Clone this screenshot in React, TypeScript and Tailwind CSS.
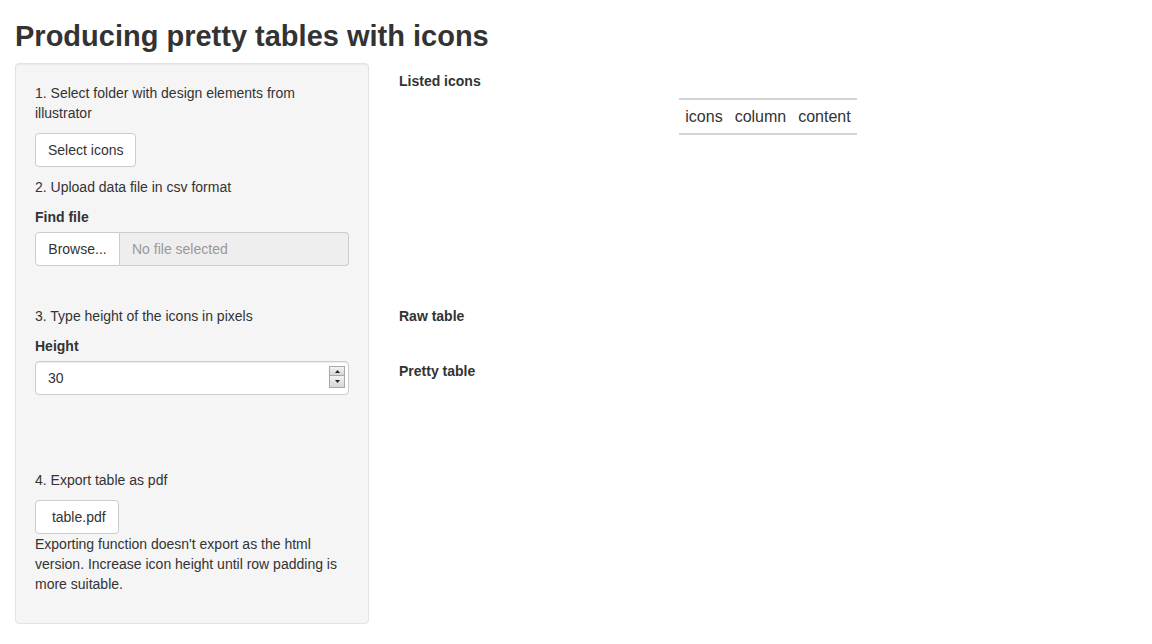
import React from "react"

function Btn({ children }: { children: React.ReactNode }) {
  return (
    <button className="h-[34px] px-[12px] bg-white border border-[#cccccc] rounded-[4px] text-[14px] leading-[20px] text-[#333333]">
      {children}
    </button>
  )
}

function Spinner() {
  return (
    <div className="absolute right-[4px] top-[5px] flex flex-col w-[16px]">
      <div className="h-[10px] bg-gradient-to-b from-[#f4f4f4] to-[#d6d6d6] border border-[#a9a9a9] flex items-center justify-center">
        <svg width="5" height="3" viewBox="0 0 5 3">
          <path d="M2.5 0 L5 3 L0 3 Z" fill="#222" />
        </svg>
      </div>
      <div className="h-[12px] bg-gradient-to-b from-[#f4f4f4] to-[#d6d6d6] border border-t-0 border-[#a9a9a9] flex items-center justify-center">
        <svg width="5" height="3" viewBox="0 0 5 3">
          <path d="M0 0 L5 0 L2.5 3 Z" fill="#222" />
        </svg>
      </div>
    </div>
  )
}

export default function App() {
  return (
    <div className="px-[15px] bg-white text-[#333333] text-[14px] leading-[20px] font-['Liberation_Sans',Arial,sans-serif] min-h-[644px]">
      <h2 className="mt-[20px] mb-[10px] text-[29px] leading-[33px] font-bold">Producing pretty tables with icons</h2>

      <div className="flex -mx-[15px]">
        <div className="w-1/3 px-[15px]">
          <div className="bg-[#f5f5f5] border border-[#e3e3e3] rounded-[4px] p-[19px] shadow-[inset_0_1px_1px_rgba(0,0,0,0.05)]">
            <p className="mb-[10px]">1. Select folder with design elements from illustrator</p>
            <div className="mb-[10px]">
              <Btn>Select icons</Btn>
            </div>
            <p className="mb-[10px]">2. Upload data file in csv format</p>
            <label className="block mb-[5px] font-bold">Find file</label>
            <div className="flex h-[34px] mb-[40px]">
              <button className="w-[85px] bg-white border border-[#cccccc] rounded-l-[4px] text-[14px] leading-[20px] text-[#333333]">
                Browse...
              </button>
              <div className="flex-1 flex items-center px-[12px] bg-[#eeeeee] border border-l-0 border-[#cccccc] rounded-r-[4px] text-[#999999]">
                No file selected
              </div>
            </div>

            <p className="mb-[10px]">3. Type height of the icons in pixels</p>
            <label className="block mb-[5px] font-bold">Height</label>
            <div className="relative h-[34px] mb-[75px]">
              <div className="h-full flex items-center px-[12px] bg-white border border-[#cccccc] rounded-[4px] shadow-[inset_0_1px_1px_rgba(0,0,0,0.075)]">
                30
              </div>
              <Spinner />
            </div>

            <p className="mb-[10px]">4. Export table as pdf</p>
            <Btn>&nbsp;table.pdf</Btn>
            <p className="mb-[10px]">
              Exporting function doesn't export as the html version. Increase icon height until row padding is more suitable.
            </p>
          </div>
        </div>

        <div className="w-2/3 px-[15px] pt-[8px]">
          <div className="font-bold">Listed icons</div>
          <div className="flex justify-center mt-[7px]">
            <table className="border-y-2 border-[#d3d3d3] border-collapse">
              <thead>
                <tr className="text-[16px] leading-[23px] font-normal">
                  <th className="px-[6px] py-[5px] font-normal">icons</th>
                  <th className="px-[6px] py-[5px] font-normal">column</th>
                  <th className="px-[6px] py-[5px] font-normal">content</th>
                </tr>
              </thead>
            </table>
          </div>
          <div className="font-bold mt-[171px]">Raw table</div>
          <div className="font-bold mt-[35px]">Pretty table</div>
        </div>
      </div>
    </div>
  )
}
